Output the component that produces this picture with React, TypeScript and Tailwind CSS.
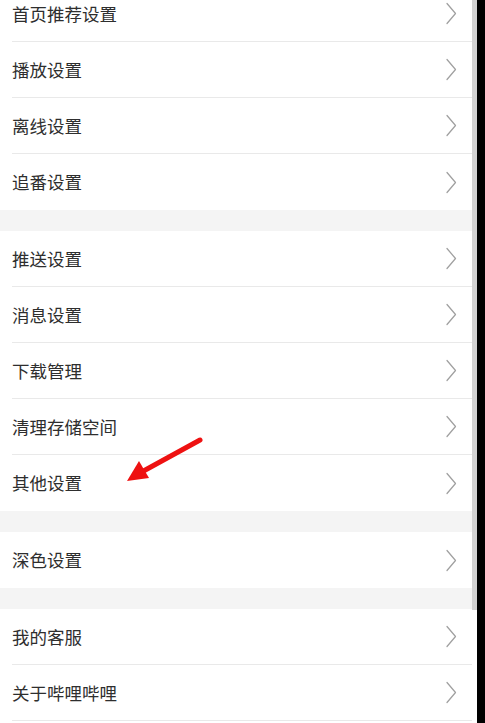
import React from "react";

const groups: string[][] = [
  ["首页推荐设置", "播放设置", "离线设置", "追番设置"],
  ["推送设置", "消息设置", "下载管理", "清理存储空间", "其他设置"],
  ["深色设置"],
  ["我的客服", "关于哔哩哔哩"],
];

function Chevron() {
  return (
    <svg width="11" height="23" viewBox="0 0 11 23" fill="none">
      <path d="M1 1.5 L9.5 11.5 L1 21.5" stroke="#a0a0a0" strokeWidth="1.25" strokeLinecap="round" strokeLinejoin="round" />
    </svg>
  );
}

function Row({ label, last }: { label: string; last: boolean }) {
  return (
    <div className="h-[56px] pl-[12px] bg-white">
      <div
        className={
          "h-full flex items-center justify-between pr-[15px] " +
          (last ? "" : "border-b border-[#e9e9e9]")
        }
      >
        <span className="text-[17.5px] text-[#2e2e2e] leading-none">{label}</span>
        <Chevron />
      </div>
    </div>
  );
}

export default function App() {
  return (
    <div
      className="relative w-[485px] h-[723px] overflow-hidden flex bg-black"
      style={{ fontFamily: '"Noto Sans CJK SC", "Noto Sans", sans-serif' }}
    >
      <div className="w-[472px] h-full bg-[#f4f4f4]">
        <div className="mt-[-14px] flex flex-col gap-[21px]">
          {groups.map((g, gi) => (
            <div key={gi} className="flex flex-col">
              {g.map((label, i) => (
                <Row key={label} label={label} last={i === g.length - 1 && gi !== 3} />
              ))}
              {gi === 3 && <div className="h-[40px] bg-white" />}
            </div>
          ))}
        </div>
      </div>
      <div className="w-[5px] h-full bg-white flex flex-col">
        <div className="h-[610px] bg-[#d2d2d2]" />
      </div>
      <div className="w-[8px] h-full bg-black" />
      <svg
        className="absolute left-0 top-0 pointer-events-none"
        width="485"
        height="723"
        viewBox="0 0 485 723"
      >
        <line x1="200" y1="440" x2="138" y2="474" stroke="#ee1111" strokeWidth="5" strokeLinecap="round" />
        <polygon points="127,481 139,461 149,478" fill="#ee1111" />
      </svg>
    </div>
  );
}
